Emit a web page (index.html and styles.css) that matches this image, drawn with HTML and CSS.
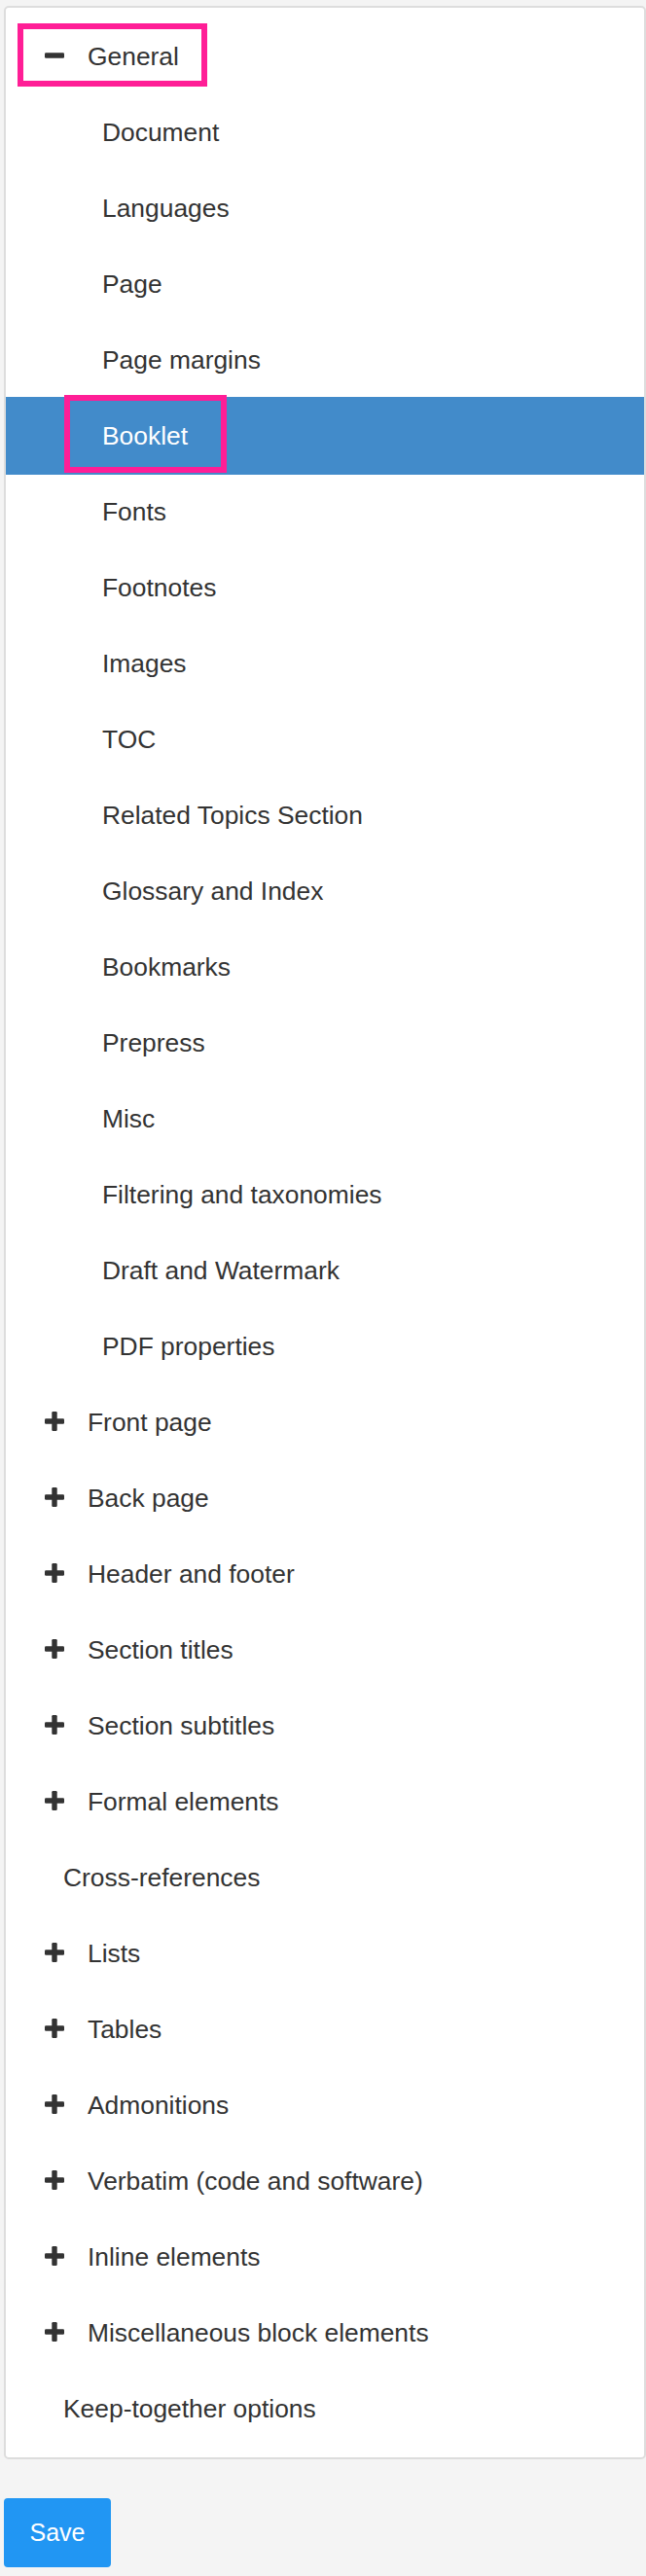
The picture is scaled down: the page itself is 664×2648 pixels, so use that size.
FILE: index.html
```html
<!DOCTYPE html>
<html>
<head>
<meta charset="utf-8">
<link rel="stylesheet" href="styles.css">
</head>
<body>
<div class="panel">
  <ul class="tree">
    <li class="row branch"><span class="mark mark-general"></span><svg class="ico" viewBox="0 0 20 20"><rect x="0" y="7.3" width="20" height="5.4" rx="1.2"/></svg><span>General</span></li>
    <li class="row sub">Document</li>
    <li class="row sub">Languages</li>
    <li class="row sub">Page</li>
    <li class="row sub">Page margins</li>
    <li class="row sub active"><span class="mark mark-booklet"></span>Booklet</li>
    <li class="row sub">Fonts</li>
    <li class="row sub">Footnotes</li>
    <li class="row sub">Images</li>
    <li class="row sub">TOC</li>
    <li class="row sub">Related Topics Section</li>
    <li class="row sub">Glossary and Index</li>
    <li class="row sub">Bookmarks</li>
    <li class="row sub">Prepress</li>
    <li class="row sub">Misc</li>
    <li class="row sub">Filtering and taxonomies</li>
    <li class="row sub">Draft and Watermark</li>
    <li class="row sub">PDF properties</li>
    <li class="row branch"><svg class="ico plus" viewBox="0 0 20 20"><rect x="0" y="7.3" width="20" height="5.4" rx="1.2"/><rect x="7.3" y="0" width="5.4" height="20" rx="1.2"/></svg><span>Front page</span></li>
    <li class="row branch"><svg class="ico plus" viewBox="0 0 20 20"><rect x="0" y="7.3" width="20" height="5.4" rx="1.2"/><rect x="7.3" y="0" width="5.4" height="20" rx="1.2"/></svg><span>Back page</span></li>
    <li class="row branch"><svg class="ico plus" viewBox="0 0 20 20"><rect x="0" y="7.3" width="20" height="5.4" rx="1.2"/><rect x="7.3" y="0" width="5.4" height="20" rx="1.2"/></svg><span>Header and footer</span></li>
    <li class="row branch"><svg class="ico plus" viewBox="0 0 20 20"><rect x="0" y="7.3" width="20" height="5.4" rx="1.2"/><rect x="7.3" y="0" width="5.4" height="20" rx="1.2"/></svg><span>Section titles</span></li>
    <li class="row branch"><svg class="ico plus" viewBox="0 0 20 20"><rect x="0" y="7.3" width="20" height="5.4" rx="1.2"/><rect x="7.3" y="0" width="5.4" height="20" rx="1.2"/></svg><span>Section subtitles</span></li>
    <li class="row branch"><svg class="ico plus" viewBox="0 0 20 20"><rect x="0" y="7.3" width="20" height="5.4" rx="1.2"/><rect x="7.3" y="0" width="5.4" height="20" rx="1.2"/></svg><span>Formal elements</span></li>
    <li class="row leaf">Cross-references</li>
    <li class="row branch"><svg class="ico plus" viewBox="0 0 20 20"><rect x="0" y="7.3" width="20" height="5.4" rx="1.2"/><rect x="7.3" y="0" width="5.4" height="20" rx="1.2"/></svg><span>Lists</span></li>
    <li class="row branch"><svg class="ico plus" viewBox="0 0 20 20"><rect x="0" y="7.3" width="20" height="5.4" rx="1.2"/><rect x="7.3" y="0" width="5.4" height="20" rx="1.2"/></svg><span>Tables</span></li>
    <li class="row branch"><svg class="ico plus" viewBox="0 0 20 20"><rect x="0" y="7.3" width="20" height="5.4" rx="1.2"/><rect x="7.3" y="0" width="5.4" height="20" rx="1.2"/></svg><span>Admonitions</span></li>
    <li class="row branch"><svg class="ico plus" viewBox="0 0 20 20"><rect x="0" y="7.3" width="20" height="5.4" rx="1.2"/><rect x="7.3" y="0" width="5.4" height="20" rx="1.2"/></svg><span>Verbatim (code and software)</span></li>
    <li class="row branch"><svg class="ico plus" viewBox="0 0 20 20"><rect x="0" y="7.3" width="20" height="5.4" rx="1.2"/><rect x="7.3" y="0" width="5.4" height="20" rx="1.2"/></svg><span>Inline elements</span></li>
    <li class="row branch"><svg class="ico plus" viewBox="0 0 20 20"><rect x="0" y="7.3" width="20" height="5.4" rx="1.2"/><rect x="7.3" y="0" width="5.4" height="20" rx="1.2"/></svg><span>Miscellaneous block elements</span></li>
    <li class="row leaf">Keep-together options</li>
  </ul>
</div>
<button class="save">Save</button>
</body>
</html>
```

FILE: styles.css
```css
html, body {
  margin: 0;
  padding: 0;
  background: #f4f4f4;
}
body {
  padding: 6px 0 0 4px;
  font-family: "Liberation Sans", Arial, Helvetica, sans-serif;
  font-size: 26.4px;
  color: #333;
}
.panel {
  background: #fff;
  border: 2px solid #dddddd;
  border-radius: 5px;
  padding: 11px 0;
}
.tree {
  list-style: none;
  margin: 0;
  padding: 0;
}
.row {
  position: relative;
  height: 78px;
  display: flex;
  align-items: center;
  white-space: nowrap;
}
.branch {
  padding-left: 40px;
}
.leaf {
  padding-left: 59px;
}
.sub {
  padding-left: 99px;
}
.ico {
  width: 20px;
  height: 20px;
  fill: #333;
  margin-right: 24px;
  flex: none;
  position: relative;
  top: -1px;
}
.active {
  background: #428bca;
  color: #fff;
  height: 80px;
  margin: -1px 0;
}
.mark {
  position: absolute;
  border: 6px solid #ff1e96;
  box-sizing: border-box;
}
.mark-general {
  left: 12px;
  top: 5px;
  width: 195px;
  height: 65px;
}
.mark-booklet {
  left: 60px;
  top: -2px;
  width: 167px;
  height: 80px;
}
.save {
  display: block;
  margin-top: 40px;
  width: 110px;
  height: 71px;
  padding: 0;
  border: none;
  border-radius: 4px;
  background: #2196f3;
  color: #fff;
  font-family: "Liberation Sans", Arial, Helvetica, sans-serif;
  font-size: 25px;
}
```
